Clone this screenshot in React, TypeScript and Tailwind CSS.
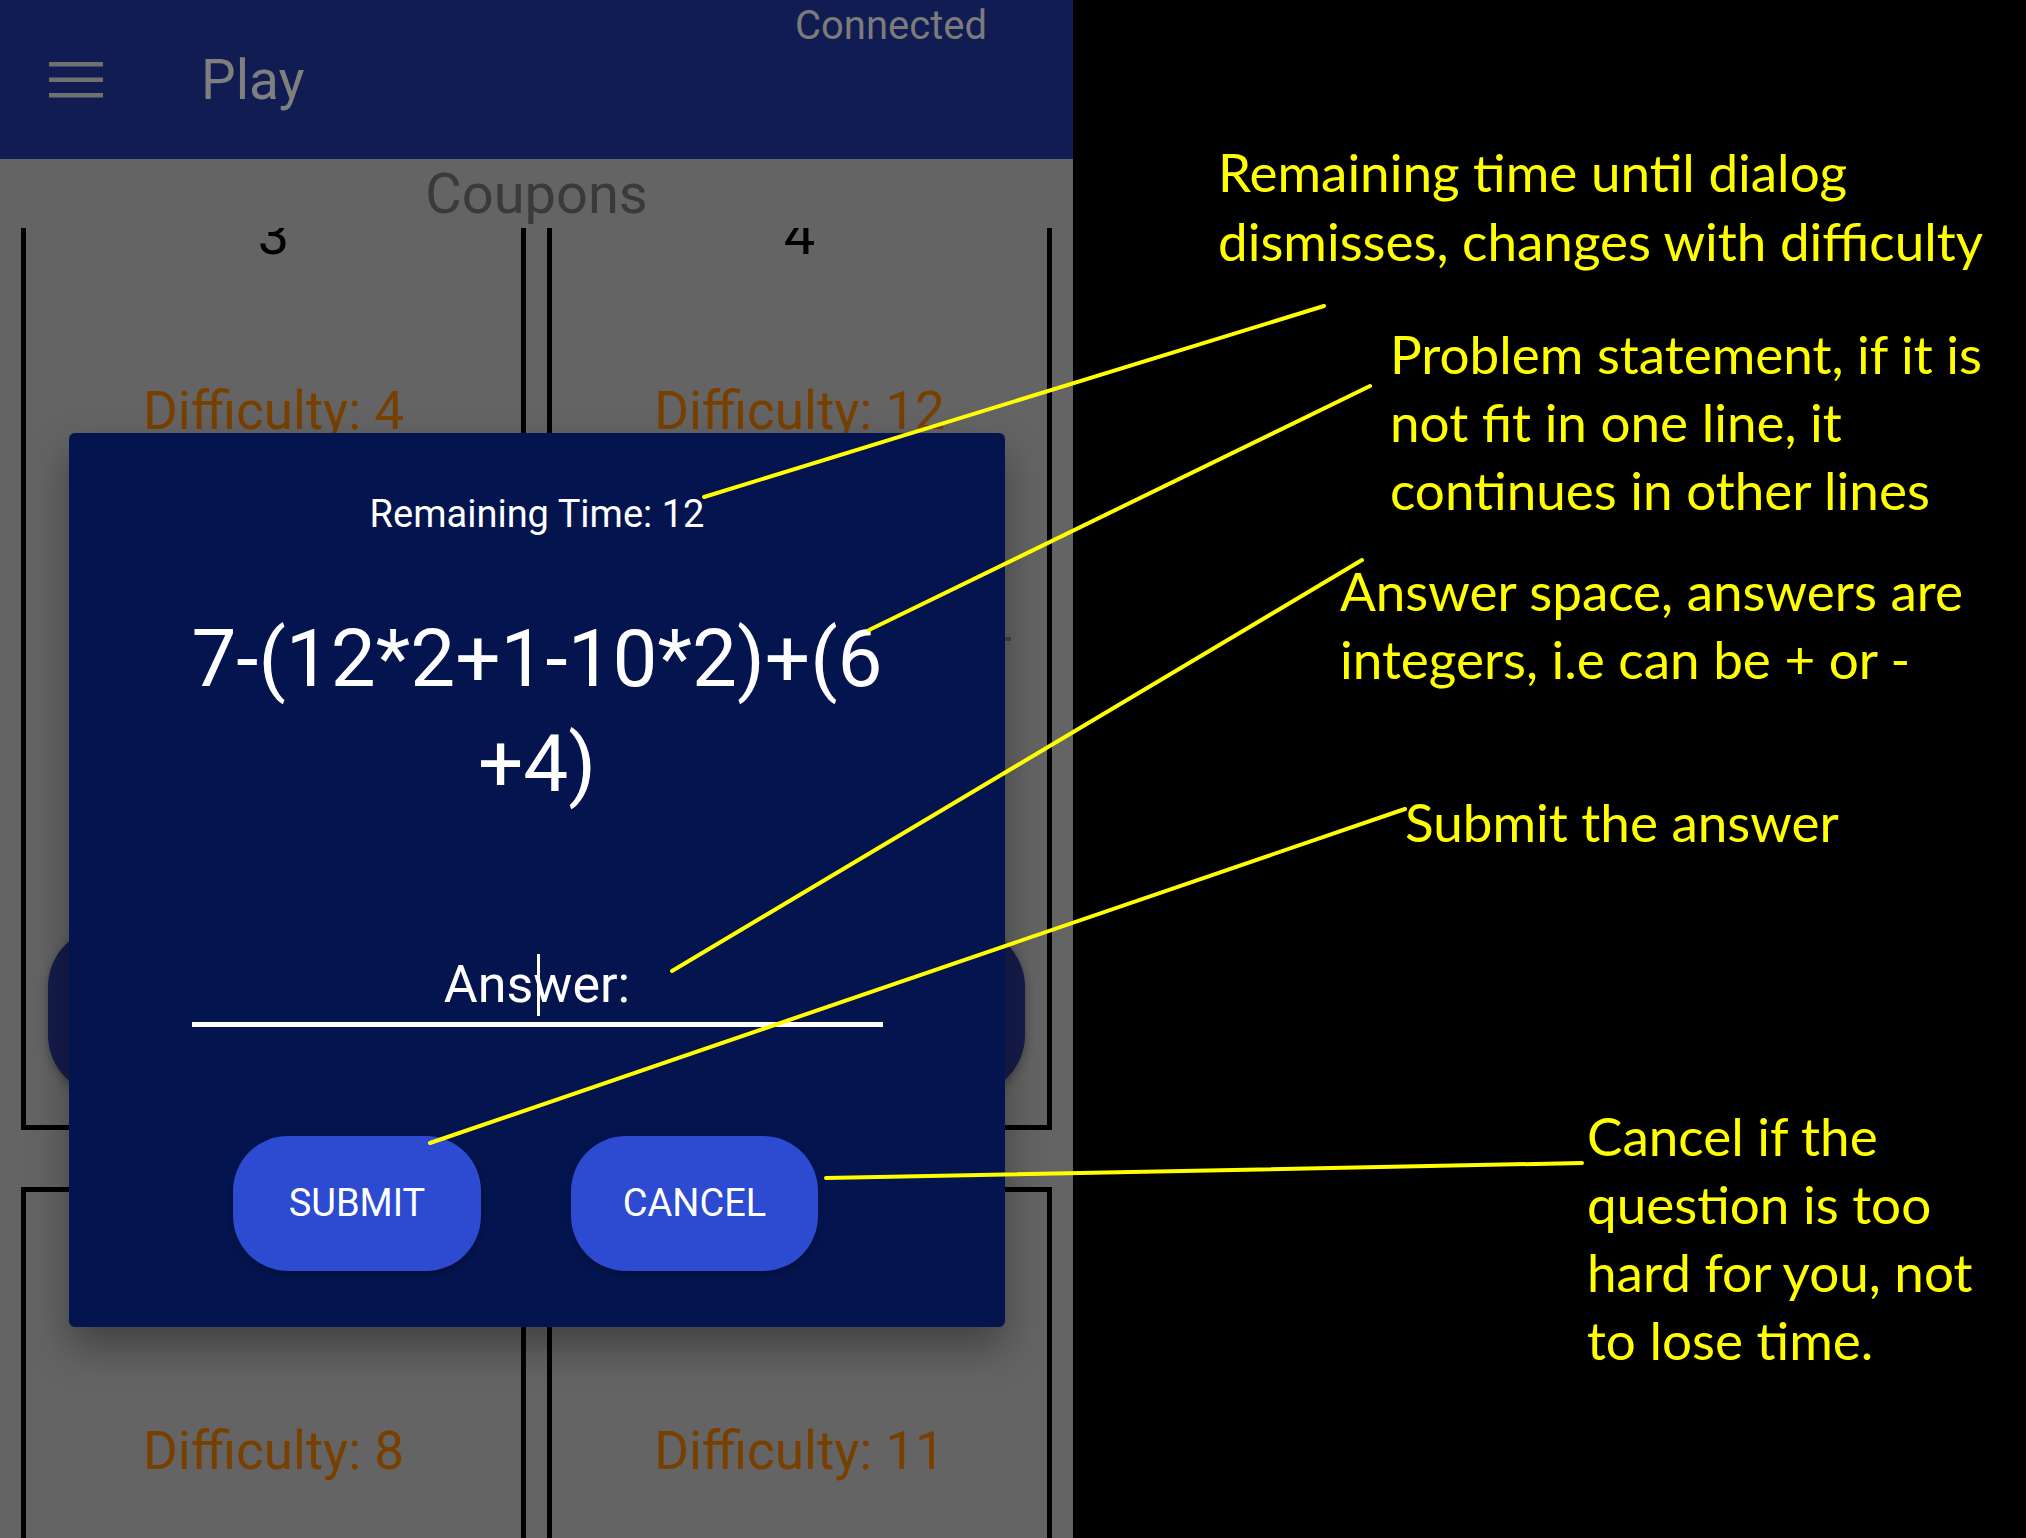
import React from 'react';

const cards = [
  { n: '3', difficulty: 4 },
  { n: '4', difficulty: 12 },
  { n: '5', difficulty: 8 },
  { n: '6', difficulty: 11 },
];

function Hamburger() {
  return (
    <svg width="54" height="36" viewBox="0 0 54 36" className="mt-[9px] shrink-0">
      <rect x="0" y="0" width="54" height="4.5" fill="#707070" />
      <rect x="0" y="15.5" width="54" height="4.5" fill="#707070" />
      <rect x="0" y="31" width="54" height="4.5" fill="#707070" />
    </svg>
  );
}

function CouponCard({ n, difficulty }: { n: string; difficulty: number }) {
  return (
    <div className="flex flex-col items-center border-[5px] border-black px-[22px] pb-[30px]">
      <div className="mt-[55px] text-[56px] leading-[56px] text-black">{n}</div>
      <div className="mt-[122px] text-[53px] leading-[53px] text-[#784000]">Difficulty: {difficulty}</div>
      <div className="mt-[489px] h-[168px] w-full rounded-[60px] bg-[#151c4b] shadow-[0_4px_10px_rgba(0,0,0,0.3)]" />
    </div>
  );
}

function Dialog() {
  return (
    <div className="absolute left-[69px] top-[433px] flex h-[894px] w-[936px] flex-col items-center rounded-[6px] bg-[#04144f] text-white shadow-[0_20px_40px_rgba(0,0,0,0.35)]">
      <div className="mt-[62px] text-[38px] leading-[38px]">Remaining Time: 12</div>
      <div className="mt-[74px] text-center text-[80px] leading-[105px]">
        <div>7-(12*2+1-10*2)+(6</div>
        <div>+4)</div>
      </div>
      <div className="relative mt-[142px] w-[691px] border-b-[5px] border-white pb-[11px] text-center text-[52px] leading-[52px]">
        Answer:
        <span className="absolute left-[345px] top-[-5px] h-[62px] w-[3px] bg-white" />
      </div>
      <div className="mt-[109px] flex w-full gap-[90px] pl-[164px]">
        <button className="flex h-[135px] w-[248px] items-center justify-center rounded-[55px] bg-[#2c4bd0] text-[38px] text-white shadow-[0_3px_6px_rgba(0,0,0,0.3)]">
          SUBMIT
        </button>
        <button className="flex h-[135px] w-[247px] items-center justify-center rounded-[55px] bg-[#2c4bd0] text-[38px] text-white shadow-[0_3px_6px_rgba(0,0,0,0.3)]">
          CANCEL
        </button>
      </div>
    </div>
  );
}

function Note({ children, className }: { children: React.ReactNode; className: string }) {
  return <div className={`text-[53px] text-[#ffff00] ${className}`}>{children}</div>;
}

export default function App() {
  return (
    <div className="relative flex h-[1538px] w-[2026px] overflow-hidden bg-black" style={{ fontFamily: 'Roboto, sans-serif' }}>
      {/* phone screen */}
      <div className="relative flex h-full w-[1073px] shrink-0 flex-col bg-[#646464]">
        <div className="flex h-[159px] flex-col bg-[#111c52]">
          <div className="pl-[795px] pt-[6px] text-[40px] leading-[40px] text-[#7b7b7b]">Connected</div>
          <div className="mt-[7px] flex items-start gap-[98px] pl-[49px]">
            <Hamburger />
            <div className="text-[55px] leading-[55px] text-[#7f7f7f]">Play</div>
          </div>
        </div>
        <div className="h-[69px] pt-[7px] text-center text-[56px] leading-[56px] text-[#3a3a3a]">Coupons</div>
        <div className="flex-1 overflow-hidden">
          <div className="-mt-[81px] grid grid-cols-2 gap-x-[21px] gap-y-[57px] px-[21px]">
            {cards.map((c) => (
              <CouponCard key={c.n} n={c.n} difficulty={c.difficulty} />
            ))}
          </div>
        </div>
        <Dialog />
        <span className="absolute left-[1005px] top-[637px] h-[4px] w-[6px] bg-[#3a3a3a]" />
      </div>

      {/* annotations */}
      <div className="flex flex-1 flex-col" style={{ fontFamily: 'Lato, sans-serif' }}>
        <Note className="ml-[145px] mt-[137px] leading-[69px]">
          Remaining time until dialog
          <br />
          dismisses, changes with difficulty
        </Note>
        <Note className="ml-[317px] mt-[45px] leading-[68px]">
          Problem statement, if it is
          <br />
          not fit in one line, it
          <br />
          continues in other lines
        </Note>
        <Note className="ml-[267px] mt-[33px] leading-[68px]">
          Answer space, answers are
          <br />
          integers, i.e can be + or -
        </Note>
        <Note className="ml-[332px] mt-[95px] leading-[68px]">Submit the answer</Note>
        <Note className="ml-[514px] mt-[246px] leading-[68px]">
          Cancel if the
          <br />
          question is too
          <br />
          hard for you, not
          <br />
          to lose time.
        </Note>
      </div>

      <svg className="pointer-events-none absolute left-0 top-0" width="2026" height="1538">
        <g stroke="#ffff00" strokeWidth="4" strokeLinecap="round">
          <line x1="704" y1="497" x2="1324" y2="306" />
          <line x1="869" y1="630" x2="1370" y2="386" />
          <line x1="672" y1="971" x2="1362" y2="560" />
          <line x1="430" y1="1143" x2="1405" y2="809" />
          <line x1="826" y1="1178" x2="1582" y2="1163" />
        </g>
      </svg>
    </div>
  );
}
